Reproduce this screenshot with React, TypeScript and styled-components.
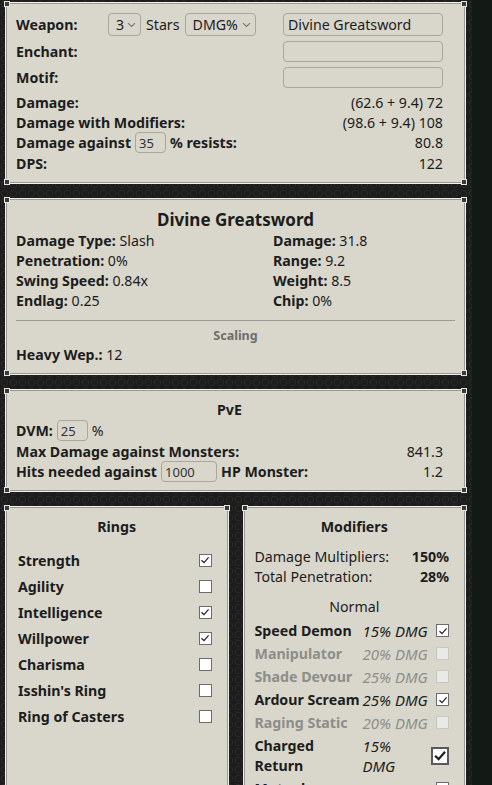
import React from 'react';
import styled, {createGlobalStyle, css} from 'styled-components';

const GlobalStyle = createGlobalStyle`
  html, body {
    margin: 0;
    padding: 0;
    background: #131a15;
    font-family: "Noto Sans", "Open Sans", sans-serif;
    color: #1c1c1c;
    font-size: 14.2px;
  }
`

const Page = styled.div`
  width: 461px;
  padding: 2px 6px 20px 5px;
  display: flex;
  flex-direction: column;
  gap: 14px;
  background-color: #1c1c1c;
  background-image:
    radial-gradient(circle at 50% 50%, transparent 2.5px, #2a2a2a 3px, transparent 4px),
    radial-gradient(circle at 0 0, transparent 2.5px, #262626 3px, transparent 4px);
  background-size: 9px 9px;
`

const Panel = styled.section`
  position: relative;
  background: #d9d7cb;
  border: 1px solid #f1f1ec;
  box-shadow: inset 0 0 0 1px #9c9a90;
  padding: 10px 10px 9px 10px;
`

const Corner = styled.span<{ $v: 'top' | 'bottom'; $h: 'left' | 'right' }>`
  position: absolute;
  width: 4px;
  height: 4px;
  ${p => p.$v}: -2px;
  ${p => p.$h}: -2px;
  border: 1px solid #e6e6e0;
  background: #3a3a38;
`

const Corners = () => (
    <>
        <Corner $v="top" $h="left"/>
        <Corner $v="top" $h="right"/>
        <Corner $v="bottom" $h="left"/>
        <Corner $v="bottom" $h="right"/>
    </>
)

const Body = styled.div`
  padding-right: 12px;
`

const Row = styled.div<{ $h?: number; $mb?: number }>`
  display: flex;
  align-items: center;
  justify-content: space-between;
  min-height: ${p => p.$h ?? 20}px;
  margin-bottom: ${p => p.$mb ?? 0}px;
`

const Label = styled.span`
  font-weight: 700;
  display: flex;
  align-items: center;
  gap: 4px;
  white-space: nowrap;
`

const Bold = styled.b`
  font-weight: 700;
`

const Value = styled.span`
  font-weight: 400;
`

const LabelCol = styled.span`
  font-weight: 700;
  width: 92px;
`

const Field = styled.div<{ $w?: number; $h?: number }>`
  box-sizing: border-box;
  width: ${p => p.$w ?? 160}px;
  height: ${p => p.$h ?? 21}px;
  border: 1px solid #a9a79d;
  border-radius: 4px;
  padding: 0 4px;
  font-size: 14.2px;
  font-weight: 400;
  display: flex;
  align-items: center;
  color: #1c1c1c;
`

const SmallField = styled(Field)`
  font-size: 13px;
  padding: 0 3px;
  color: #333;
`

const SelectGroup = styled.div`
  display: flex;
  align-items: center;
  gap: 5px;
  margin-right: auto;
`

const Select = styled.div<{ $w: number }>`
  box-sizing: border-box;
  width: ${p => p.$w}px;
  height: 23px;
  border: 1px solid #a9a79d;
  border-radius: 4px;
  padding: 0 4px 0 7px;
  display: flex;
  align-items: center;
  justify-content: space-between;
`

const Chevron = () => (
    <svg width="9" height="6" viewBox="0 0 9 6" fill="none">
        <path d="M1 1.2L4.5 4.5L8 1.2" stroke="#777" strokeWidth="1.1"/>
    </svg>
)

const Title = styled.h2<{ $size?: number }>`
  margin: 0;
  text-align: center;
  font-size: ${p => p.$size ?? 14.2}px;
  line-height: ${p => Math.round((p.$size ?? 15) + 5)}px;
  font-weight: 700;
`

const StatGrid = styled.div`
  display: grid;
  grid-template-columns: 257px 1fr;
  line-height: 20px;
`

const Divider = styled.hr`
  border: 0;
  border-top: 1px solid #9b9b97;
  margin: 9px 0 7px 0;
`

const SubTitle = styled.div<{ $muted?: boolean }>`
  text-align: center;
  font-size: ${p => p.$muted ? 12.5 : 14.2}px;
  line-height: 16px;
  font-weight: ${p => p.$muted ? 700 : 400};
  color: ${p => p.$muted ? '#6e6e6b' : '#1c1c1c'};
`

const Columns = styled.div`
  display: grid;
  grid-template-columns: 1fr 1fr;
  gap: 14px;
`

const TallPanel = styled(Panel)`
  height: 300px;
`

const RingList = styled.div`
  margin-top: 10px;
  padding: 0 6px 0 2px;
`

const RingRow = styled.div`
  display: flex;
  align-items: center;
  justify-content: space-between;
  height: 26px;
  font-weight: 700;
`

const Check = styled.span<{ $off?: boolean; $size?: number }>`
  box-sizing: border-box;
  width: ${p => p.$size ?? 13}px;
  height: ${p => p.$size ?? 13}px;
  flex: none;
  display: inline-flex;
  align-items: center;
  justify-content: center;
  background: #fff;
  border: 1px solid #6c6c6c;
  ${p => p.$size && p.$size > 13 && css`border-width: 2px; border-color: #5a5a5a;`}
  ${p => p.$off && css`
    background: #e9e9e7;
    border-color: #c7c7c2;
  `}
`

const CheckBox = ({on, off, size}: { on?: boolean; off?: boolean; size?: number }) => (
    <Check $off={off} $size={size}>
        {on &&
            <svg width={(size ?? 13) - 3} height={(size ?? 13) - 3} viewBox="0 0 10 10" fill="none">
                <path d="M1.5 5.2L4 7.6L8.6 2.4" stroke="#1e1e1e" strokeWidth={size && size > 13 ? 1.6 : 1.2}/>
            </svg>}
    </Check>
)

const Totals = styled.div`
  margin-top: 10px;
  padding: 0 6px 0 1px;
  line-height: 20px;
`

const TotalRow = styled.div`
  display: flex;
  justify-content: space-between;
`

const ModGroup = styled.div`
  margin-top: 12px;
`

const ModTable = styled.div`
  margin-top: 4px;
  padding: 0 6px 0 1px;
  display: grid;
  grid-template-columns: 108px 1fr auto;
  align-items: center;
`

const ModName = styled.span<{ $off?: boolean }>`
  font-weight: 700;
  line-height: 20px;
  padding: 1.5px 0;
  color: ${p => p.$off ? '#8d8d8a' : '#1c1c1c'};
  white-space: nowrap;
`

const ModValue = styled.span<{ $off?: boolean }>`
  font-style: italic;
  font-size: 15px;
  line-height: 20px;
  color: ${p => p.$off ? '#8d8d8a' : '#1c1c1c'};
  white-space: nowrap;
`

const ModCheck = styled.span`
  display: flex;
  justify-content: flex-end;
`

const modifiers = [
    {name: 'Speed Demon', value: '15% DMG', on: true},
    {name: 'Manipulator', value: '20% DMG', off: true},
    {name: 'Shade Devour', value: '25% DMG', off: true},
    {name: 'Ardour Scream', value: '25% DMG', on: true},
    {name: 'Raging Static', value: '20% DMG', off: true},
]

const rings = [
    {name: 'Strength', on: true},
    {name: 'Agility'},
    {name: 'Intelligence', on: true},
    {name: 'Willpower', on: true},
    {name: 'Charisma'},
    {name: "Isshin's Ring"},
    {name: 'Ring of Casters'},
]

const App: React.FC = () => {
    return (
        <>
            <GlobalStyle/>
            <Page>
                <Panel>
                    <Corners/>
                    <Body>
                        <Row $h={23} $mb={5}>
                            <LabelCol>Weapon:</LabelCol>
                            <SelectGroup>
                                <Select $w={33}>3 <Chevron/></Select>
                                Stars
                                <Select $w={71}>DMG% <Chevron/></Select>
                            </SelectGroup>
                            <Field $h={23}>Divine Greatsword</Field>
                        </Row>
                        <Row $h={21} $mb={5}>
                            <Label>Enchant:</Label>
                            <Field/>
                        </Row>
                        <Row $h={21} $mb={4}>
                            <Label>Motif:</Label>
                            <Field/>
                        </Row>
                        <Row>
                            <Label>Damage:</Label>
                            <Value>(62.6 + 9.4) 72</Value>
                        </Row>
                        <Row>
                            <Label>Damage with Modifiers:</Label>
                            <Value>(98.6 + 9.4) 108</Value>
                        </Row>
                        <Row>
                            <Label>Damage against <SmallField $w={31}>35</SmallField> % resists:</Label>
                            <Value>80.8</Value>
                        </Row>
                        <Row $h={21}>
                            <Label>DPS:</Label>
                            <Value>122</Value>
                        </Row>
                    </Body>
                </Panel>

                <Panel>
                    <Corners/>
                    <Title $size={17}>Divine Greatsword</Title>
                    <StatGrid>
                        <span><Bold>Damage Type:</Bold> Slash</span>
                        <span><Bold>Damage:</Bold> 31.8</span>
                        <span><Bold>Penetration:</Bold> 0%</span>
                        <span><Bold>Range:</Bold> 9.2</span>
                        <span><Bold>Swing Speed:</Bold> 0.84x</span>
                        <span><Bold>Weight:</Bold> 8.5</span>
                        <span><Bold>Endlag:</Bold> 0.25</span>
                        <span><Bold>Chip:</Bold> 0%</span>
                    </StatGrid>
                    <Divider/>
                    <SubTitle $muted>Scaling</SubTitle>
                    <Row $mb={1}>
                        <span><Bold>Heavy Wep.:</Bold> 12</span>
                    </Row>
                </Panel>

                <Panel>
                    <Corners/>
                    <Body>
                        <Title>PvE</Title>
                        <Row $h={21}>
                            <Label>DVM: <SmallField $w={31}>25</SmallField><Value>%</Value></Label>
                        </Row>
                        <Row>
                            <Label>Max Damage against Monsters:</Label>
                            <Value>841.3</Value>
                        </Row>
                        <Row $h={21}>
                            <Label>Hits needed against <SmallField $w={56}>1000</SmallField> HP Monster:</Label>
                            <Value>1.2</Value>
                        </Row>
                    </Body>
                </Panel>

                <Columns>
                    <TallPanel>
                        <Corners/>
                        <Title>Rings</Title>
                        <RingList>
                            {rings.map(r => (
                                <RingRow key={r.name}>
                                    {r.name}
                                    <CheckBox on={r.on}/>
                                </RingRow>
                            ))}
                        </RingList>
                    </TallPanel>

                    <TallPanel>
                        <Corners/>
                        <Title>Modifiers</Title>
                        <Totals>
                            <TotalRow><span>Damage Multipliers:</span><Bold>150%</Bold></TotalRow>
                            <TotalRow><span>Total Penetration:</span><Bold>28%</Bold></TotalRow>
                        </Totals>
                        <ModGroup>
                            <SubTitle>Normal</SubTitle>
                            <ModTable>
                                {modifiers.map(m => (
                                    <React.Fragment key={m.name}>
                                        <ModName $off={m.off}>{m.name}</ModName>
                                        <ModValue $off={m.off}>{m.value}</ModValue>
                                        <ModCheck><CheckBox on={m.on} off={m.off}/></ModCheck>
                                    </React.Fragment>
                                ))}
                                <ModName>Charged<br/>Return</ModName>
                                <ModValue>15%<br/>DMG</ModValue>
                                <ModCheck><CheckBox on size={18}/></ModCheck>
                                <ModName>Mutual</ModName>
                                <ModValue>30% DMG</ModValue>
                                <ModCheck><CheckBox on/></ModCheck>
                            </ModTable>
                        </ModGroup>
                    </TallPanel>
                </Columns>
            </Page>
        </>
    );
}

export default App;
